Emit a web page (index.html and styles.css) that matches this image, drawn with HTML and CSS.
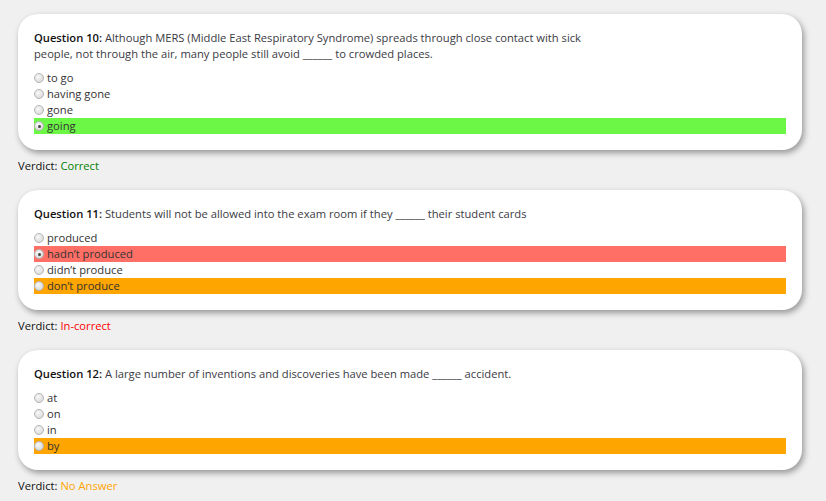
FILE: index.html
```html
<!DOCTYPE html>
<html>
<head>
<meta charset="utf-8">
<link rel="stylesheet" href="styles.css">
</head>
<body>
<div class="page">
  <div class="card">
    <p class="question"><b>Question 10:</b> Although MERS (Middle East Respiratory Syndrome) spreads through close contact with sick people, not through the air, many people still avoid ______ to crowded places.</p>
    <ul class="options">
      <li class="opt"><span class="radio"></span>to go</li>
      <li class="opt"><span class="radio"></span>having gone</li>
      <li class="opt"><span class="radio"></span>gone</li>
      <li class="opt right"><span class="radio checked"></span>going</li>
    </ul>
  </div>
  <p class="verdict">Verdict: <span class="ok">Correct</span></p>

  <div class="card">
    <p class="question"><b>Question 11:</b> Students will not be allowed into the exam room if they ______ their student cards</p>
    <ul class="options">
      <li class="opt"><span class="radio"></span>produced</li>
      <li class="opt wrong"><span class="radio checked"></span>hadn’t produced</li>
      <li class="opt"><span class="radio"></span>didn’t produce</li>
      <li class="opt answer"><span class="radio"></span>don’t produce</li>
    </ul>
  </div>
  <p class="verdict">Verdict: <span class="bad">In-correct</span></p>

  <div class="card">
    <p class="question"><b>Question 12:</b> A large number of inventions and discoveries have been made ______ accident.</p>
    <ul class="options">
      <li class="opt"><span class="radio"></span>at</li>
      <li class="opt"><span class="radio"></span>on</li>
      <li class="opt"><span class="radio"></span>in</li>
      <li class="opt answer"><span class="radio"></span>by</li>
    </ul>
  </div>
  <p class="verdict">Verdict: <span class="none">No Answer</span></p>
</div>
</body>
</html>
```

FILE: styles.css
```css
html, body {
  margin: 0;
  padding: 0;
  background: #f0f0f0;
}
body {
  font-family: "Open Sans", "DejaVu Sans", sans-serif;
  font-size: 11.2px;
  line-height: 16px;
  color: #222;
}
.page {
  padding: 14px 24px 0 18px;
}
.card {
  background: #fff;
  border-radius: 20px;
  box-shadow: 2px 3px 6px rgba(0, 0, 0, 0.38);
  padding: 16px;
}
.question {
  margin: 0 0 8px;
  max-width: 560px;
  color: #3a3a44;
  padding-top: 1px;
  margin-top: -1px;
}
.question b {
  color: #111;
  font-weight: 600;
}
.options {
  list-style: none;
  margin: 0;
  padding: 0;
}
.opt {
  height: 16px;
  display: flex;
  align-items: center;
  gap: 3px;
  color: #333;
}
.opt.right { background: #6cf645; }
.opt.wrong { background: #ff6f66; }
.opt.answer { background: #ffa500; }
.radio {
  width: 10px;
  height: 10px;
  box-sizing: border-box;
  border-radius: 50%;
  border: 1px solid #b5b5b5;
  background: radial-gradient(circle at 40% 35%, #f8f8f8, #d2d2d2);
  flex: none;
  position: relative;
}
.radio.checked::after {
  content: "";
  position: absolute;
  left: 2.5px;
  top: 2.5px;
  width: 3px;
  height: 3px;
  border-radius: 50%;
  background: #444;
}
.verdict {
  margin: 8px 0 16px;
  color: #111;
  padding-top: 1px;
  margin-top: 7px;
}
.ok { color: #008000; }
.bad { color: #ff0000; }
.none { color: #ffa500; }
```
